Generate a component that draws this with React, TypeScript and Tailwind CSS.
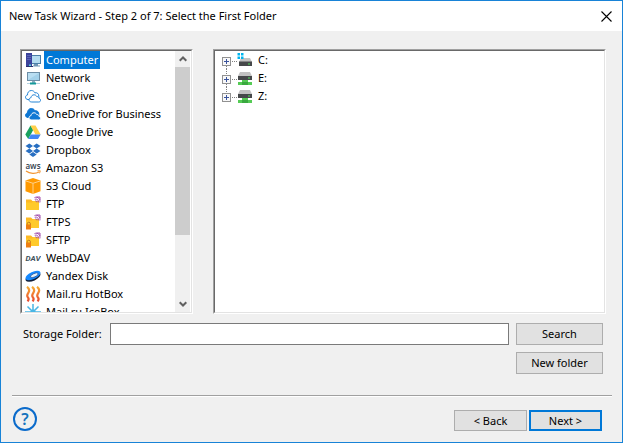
import { useState, type ReactNode } from 'react'

type Storage = {
  name: string
  icon: ReactNode
}

type Drive = {
  name: string
  network: boolean
}

function Svg({ children }: { children: ReactNode }) {
  return (
    <svg viewBox="0 0 16 16" className="w-4 h-4 shrink-0" aria-hidden="true">
      {children}
    </svg>
  )
}

function ComputerIcon() {
  return (
    <Svg>
      <path d="M6 3h10v9H6z" fill="#4b7fa8" />
      <path d="M7 4h8v7H7z" fill="#b5dcf0" />
      <path d="M9 12h4v1.500h2v1H8z" fill="#6f95b5" />
      <path d="M1 1h6v14H1z" fill="#3c449c" />
      <path d="M2 3.500h4M2 5.500h4M2 7.500h4" stroke="#6a73c4" strokeWidth=".7" />
      <path d="M4 12.500h2V14H4z" fill="#59d1dc" />
      <path d="M1 14h7v1H1z" fill="#27306f" />
    </Svg>
  )
}

function NetworkIcon() {
  return (
    <Svg>
      <path d="M2 2h13v9H2z" fill="#6d8ea6" />
      <path d="M3 3h11v7H3z" fill="#b9def2" />
      <path d="M3 10l11-7v7z" fill="#a3d1ea" />
      <path d="M7 11h3v2H7z" fill="#8fb0c4" />
      <path d="M2 13h13v1H2z" fill="#b4d4e2" />
      <path d="M5 12.500h6v2H5z" fill="#159a9a" />
    </Svg>
  )
}

function OneDriveIcon({ filled }: { filled?: boolean }) {
  return (
    <Svg>
      <path
        d="M3 11.500C1.500 11.500.5 10.500.5 9.200C.5 8 1.400 7.100 2.500 7C2.300 4.500 4 2.500 6.300 2.500C8 2.500 9.300 3.400 9.900 4.800C12.300 4.300 14 6 13.800 8.300V11.500Z"
        fill={filled ? '#0f78d4' : '#fff'}
        stroke={filled ? '#0f78d4' : '#2585d6'}
      />
      <path
        d="M6.800 14C5 14 4 13 4 11.800C4 10.600 4.900 9.800 6 9.700C6.200 7.900 7.400 6.800 9 6.800C10.300 6.800 11.300 7.500 11.800 8.600C13.100 8.400 14 9.300 14.100 10.500C15 10.700 15.600 11.400 15.600 12.300C15.600 13.300 14.800 14 13.800 14Z"
        fill={filled ? '#0f78d4' : '#fff'}
        stroke={filled ? '#fff' : '#2585d6'}
      />
    </Svg>
  )
}

function GoogleDriveIcon() {
  return (
    <Svg>
      <path d="M5.500 1.500L8.200 6L3.200 15L0.300 10.500z" fill="#1aa15f" />
      <path d="M5.500 1.500h5l5.200 9h-5.300z" fill="#ffcf48" />
      <path d="M5.800 10.500h9.900L13 15H3.200z" fill="#4286f5" />
    </Svg>
  )
}

function DropboxIcon() {
  return (
    <Svg>
      <path
        d="M4.300 1.500L8 4L4.300 6.500L.5 4zM11.700 1.500L15.500 4L11.700 6.500L8 4zM4.300 6.500L8 9L4.300 11.500L.5 9zM11.700 6.500L15.500 9L11.700 11.500L8 9zM8 10l3.700 2.400L8 15l-3.700-2.600z"
        fill="#286fc2"
      />
    </Svg>
  )
}

function AwsIcon() {
  return (
    <Svg>
      <text x="8" y="9" textAnchor="middle" fontSize="8" fontWeight="600" fontFamily="Open Sans, sans-serif" fill="#303c4c">
        aws
      </text>
      <path d="M1 11C5 14 10.500 14 14 12" fill="none" stroke="#f39632" strokeWidth="1.200" />
      <path d="M12.500 10.800h2.800l-.8 2.500" fill="none" stroke="#f39632" />
    </Svg>
  )
}

function S3CloudIcon() {
  return (
    <Svg>
      <path d="M8 0l7.500 2.500v10.800L8 16L.5 13.300V2.500z" fill="#ff9900" />
      <path d="M1 3l7 2.300L15 3M8 5.300V16" fill="none" stroke="#ffd18b" />
    </Svg>
  )
}

function FolderIcon({ locked }: { locked?: boolean }) {
  return (
    <Svg>
      <path d="M1 3.500h5L7.500 5H14v9H1z" fill="#fdb924" />
      <path d="M1 6.500h6L8.500 5H14v9H1z" fill="#ffca2b" />
      <path d="M9.500 1.500C13 .3 15.800 3 14.800 6.500M9.700 3.200C12.300 2.600 13.800 4 13.200 6.400M10.300 4.900C11.300 4.600 12 5.200 11.700 6.200M11.500 1h3.500v3" fill="none" stroke="#9a3fa5" strokeWidth=".9" />
      {locked && (
        <>
          <path d="M2.200 11V9.800a1.600 1.600 0 0 1 3.200 0V11" fill="none" stroke="#b9731c" strokeWidth=".9" />
          <path d="M1 10.500h5V15.500H1z" fill="#ee7f12" />
        </>
      )}
    </Svg>
  )
}

function DavIcon() {
  return (
    <Svg>
      <text x="8" y="11" textAnchor="middle" fontSize="8" fontWeight="700" fontStyle="italic" fontFamily="Roboto, sans-serif" fill="#41525c">
        DAV
      </text>
    </Svg>
  )
}

function YandexIcon() {
  return (
    <Svg>
      <ellipse cx="8" cy="9" rx="8" ry="3.800" transform="rotate(-25 8 9)" fill="#101d38" />
      <ellipse cx="8" cy="7.500" rx="8" ry="3.600" transform="rotate(-25 8 7.500)" fill="#1689ff" />
      <ellipse cx="9.300" cy="7.300" rx="4.200" ry="1.700" transform="rotate(-25 9.300 7.300)" fill="#e4f1fa" stroke="#12418e" strokeWidth=".6" />
    </Svg>
  )
}

function HotBoxIcon() {
  return (
    <Svg>
      <defs>
        <linearGradient id="flame" gradientUnits="userSpaceOnUse" x1="0" y1="0" x2="0" y2="16">
          <stop offset="0" stopColor="#f8b133" />
          <stop offset="1" stopColor="#e8452f" />
        </linearGradient>
      </defs>
      <path
        d="M2 .8C5 3 4.600 4.800 3.300 6.800C2 8.800 1.500 10 3 11.500C4 12.800 3.800 14 2.500 15.300M7 .8C10 3 9.600 4.800 8.300 6.800C7 8.800 6.500 10 8 11.500C9 12.800 8.800 14 7.500 15.300M12 .8C15 3 14.600 4.800 13.300 6.800C12 8.800 11.500 10 13 11.500C14 12.800 13.800 14 12.500 15.300"
        fill="none"
        stroke="url(#flame)"
        strokeWidth="2.200"
      />
    </Svg>
  )
}

function IceBoxIcon() {
  return (
    <Svg>
      <path d="M8 0v16M0 8h16M2.500 2.500l11 11M13.500 2.500l-11 11" stroke="#49b6e5" strokeWidth="1.500" />
      <circle cx="8" cy="8" r="2.500" fill="#49b6e5" />
    </Svg>
  )
}

const STORAGES: Storage[] = [
  { name: 'Computer', icon: <ComputerIcon /> },
  { name: 'Network', icon: <NetworkIcon /> },
  { name: 'OneDrive', icon: <OneDriveIcon /> },
  { name: 'OneDrive for Business', icon: <OneDriveIcon filled /> },
  { name: 'Google Drive', icon: <GoogleDriveIcon /> },
  { name: 'Dropbox', icon: <DropboxIcon /> },
  { name: 'Amazon S3', icon: <AwsIcon /> },
  { name: 'S3 Cloud', icon: <S3CloudIcon /> },
  { name: 'FTP', icon: <FolderIcon /> },
  { name: 'FTPS', icon: <FolderIcon locked /> },
  { name: 'SFTP', icon: <FolderIcon locked /> },
  { name: 'WebDAV', icon: <DavIcon /> },
  { name: 'Yandex Disk', icon: <YandexIcon /> },
  { name: 'Mail.ru HotBox', icon: <HotBoxIcon /> },
  { name: 'Mail.ru IceBox', icon: <IceBoxIcon /> },
]

const DRIVES: Drive[] = [
  { name: 'C:', network: false },
  { name: 'E:', network: true },
  { name: 'Z:', network: true },
]

function DriveIcon({ network }: { network: boolean }) {
  return (
    <Svg>
      {network ? (
        <>
          <path d="M3 2h10l2 4H1z" fill="#c2c2c2" />
          <path d="M1 6h14v4H1z" fill="#46484a" />
          <path d="M11 7.500h2v1h-2z" fill="#4ee05a" />
          <path d="M5 10h6v2h4v3H1v-3h4z" fill="#55cb55" />
          <path d="M5 12h6v3H5z" fill="#3aa83f" />
        </>
      ) : (
        <>
          <path d="M4 6h9l2 4H2z" fill="#c2c2c2" />
          <path d="M2 9.500h13V14H2z" fill="#46484a" />
          <path d="M11 11.500h2v1h-2z" fill="#4ee05a" />
          <path d="M.5 1h2.500v2.500H.5zM4 1h2.500v2.500H4zM.5 4.500h2.500V7H.5zM4 4.500h2.500V7H4z" fill="#00b5ef" />
        </>
      )}
    </Svg>
  )
}

// Two-tone frame around the lists
function SunkenBox({ className, children }: { className: string; children: ReactNode }) {
  return (
    <div className={`border border-t-[#a0a0a0] border-l-[#a0a0a0] border-r-white border-b-white ${className}`}>
      <div className="h-full flex border border-t-[#696969] border-l-[#696969] border-r-[#e3e3e3] border-b-[#e3e3e3] bg-white">
        {children}
      </div>
    </div>
  )
}

function ScrollArrow({ up }: { up?: boolean }) {
  return (
    <button type="button" aria-label={up ? 'Scroll up' : 'Scroll down'} className="h-4 w-full flex items-center justify-center">
      <svg viewBox="0 0 8 6" className="w-2 h-1.5">
        <path d={up ? 'M.7 4.800L4 1.500l3.300 3.300' : 'M.7 1.200L4 4.500l3.300-3.300'} fill="none" stroke="#606060" strokeWidth="2" />
      </svg>
    </button>
  )
}

const BUTTON = 'bg-[#e1e1e1] border border-[#adadad] flex items-center justify-center hover:bg-[#e5f1fb]'

export default function App() {
  const [selected, setSelected] = useState('Computer')
  const [folder, setFolder] = useState('')

  return (
    <div className="min-h-screen flex flex-col bg-[#f0f0f0] border border-[#1883d7] font-['Noto_Sans',sans-serif] text-[11px] leading-[18px] text-black">
      <header className="h-[30px] bg-white flex items-center justify-between pl-2 pr-2.5">
        <h1>New Task Wizard - Step 2 of 7: Select the First Folder</h1>
        <button type="button" aria-label="Close">
          <svg viewBox="0 0 11 11" className="w-[11px] h-[11px]">
            <path d="M.5.5l10 10M10.500.5l-10 10" stroke="#000" strokeWidth="1.100" />
          </svg>
        </button>
      </header>

      <main className="pt-[18px] pl-[19px] pr-4">
        <div className="flex gap-5">
          <SunkenBox className="w-[173px] h-[265px] shrink-0">
            <ul className="flex-1 min-w-0 overflow-hidden pl-[3px]">
              {STORAGES.map((s) => (
                <li key={s.name}>
                  <button type="button" onClick={() => setSelected(s.name)} className="h-[18px] flex items-center gap-[3px] whitespace-nowrap">
                    {s.icon}
                    <span className={selected === s.name ? 'bg-[#0078d7] text-white px-0.5' : 'px-0.5'}>{s.name}</span>
                  </button>
                </li>
              ))}
            </ul>
            <div className="w-[15px] mr-px shrink-0 bg-[#f0f0f0] flex flex-col">
              <ScrollArrow up />
              <div className="flex-1">
                <div className="h-[168px] bg-[#cdcdcd]" />
              </div>
              <ScrollArrow />
            </div>
          </SunkenBox>

          <SunkenBox className="flex-1 h-[265px]">
            <ul className="pl-[7px]">
              {DRIVES.map((d, i) => (
                <li key={d.name} className="h-[18px] flex items-center">
                  <button type="button" aria-label={`Expand ${d.name}`} className="h-[18px]">
                    <svg viewBox="0 0 15 18" className="w-[15px] h-[18px]">
                      {i > 0 && <path d="M4.500 0v6" stroke="#808080" strokeDasharray="1 1" />}
                      {i < DRIVES.length - 1 && <path d="M4.500 15v3" stroke="#808080" strokeDasharray="1 1" />}
                      <path d="M10 10.500h5" stroke="#808080" strokeDasharray="1 1" />
                      <rect x=".5" y="6.500" width="8" height="8" fill="#f8f8f8" stroke="#919191" />
                      <path d="M2 10.500h5M4.500 8v5" stroke="#3a539b" />
                    </svg>
                  </button>
                  <DriveIcon network={d.network} />
                  <span className="pl-[5px]">{d.name}</span>
                </li>
              ))}
            </ul>
          </SunkenBox>
        </div>

        <div className="flex items-center mt-[9px] pl-[3px] pr-[3px]">
          <label htmlFor="folder" className="w-[87px] shrink-0">Storage Folder:</label>
          <input
            id="folder"
            value={folder}
            onChange={(e) => setFolder(e.target.value)}
            className="flex-1 min-w-0 h-[22px] bg-white border border-[#7a7a7a] px-1 outline-none mr-[7px]"
          />
          <button type="button" className={`${BUTTON} w-[87px] h-[22px]`}>Search</button>
        </div>
        <div className="flex justify-end mt-[7px] pr-[3px]">
          <button type="button" className={`${BUTTON} w-[87px] h-[22px]`}>New folder</button>
        </div>
      </main>

      <footer className="mt-[21px] ml-[11px] mr-[10px] border-t border-[#a0a0a0]">
        <div className="border-t border-white pt-2.5 pr-[10px] flex items-end justify-between">
          <button type="button" aria-label="Help">
            <svg viewBox="0 0 26 24" className="w-[26px] h-6">
              <circle cx="13" cy="12" r="11" fill="none" stroke="#0b6bcb" strokeWidth="2" />
              <text x="13" y="18" textAnchor="middle" fontSize="16" fontWeight="600" fontFamily="Noto Sans, sans-serif" fill="#1673bd">?</text>
            </svg>
          </button>
          <div className="flex gap-0.5">
            <button type="button" className={`${BUTTON} w-[73px] h-[21px]`}>&lt; Back</button>
            <button type="button" className="w-[73px] h-[21px] bg-[#e1e1e1] border-2 border-[#0078d7] flex items-center justify-center">Next &gt;</button>
          </div>
        </div>
      </footer>
    </div>
  )
}
